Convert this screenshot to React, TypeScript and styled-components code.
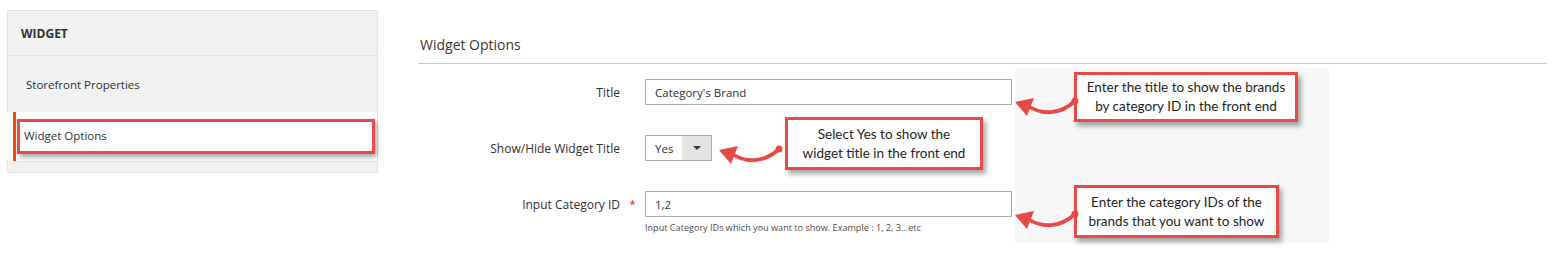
import React from 'react';
import styled, { createGlobalStyle } from 'styled-components';

const GlobalStyle = createGlobalStyle`
  html, body {
    margin: 0;
    padding: 0;
    background: #ffffff;
  }
  body {
    font-family: 'Open Sans', 'Noto Sans', sans-serif;
    color: #303030;
  }
`;

const ANNOTATION_RED = '#e84a48';

type Callout = { left: number; top: number; width: number; height: number; lines: string[] };
type ArrowSpot = { left: number; top: number };

const callouts: Callout[] = [
  { left: 1074, top: 72, width: 224, height: 50, lines: ['Enter the title to show the brands', 'by category ID in the front end'] },
  { left: 785, top: 117, width: 198, height: 53, lines: ['Select Yes to show the', 'widget title in the front end'] },
  { left: 1074, top: 185, width: 205, height: 53, lines: ['Enter the category IDs of the', 'brands that you want to show'] },
];

const arrows: ArrowSpot[] = [
  { left: 1012, top: 94 },
  { left: 716, top: 142 },
  { left: 1012, top: 207 },
];

const CurvedArrow: React.FC<{ spot: ArrowSpot }> = ({ spot }) => (
  <ArrowSvg width="68" height="26" viewBox="0 0 68 26" style={{ left: spot.left, top: spot.top }}>
    <path d="M16 12 C 30 21, 48 21, 63 7" fill="none" stroke={ANNOTATION_RED} strokeWidth="3.8" strokeLinecap="round" />
    <polygon points="3,8 22,4 15,22" fill={ANNOTATION_RED} />
    <circle cx="63" cy="7" r="3.5" fill={ANNOTATION_RED} />
  </ArrowSvg>
);

export default function App() {
  return (
    <Page>
      <GlobalStyle />
      <Sidebar>
        <SidebarHeader>Widget</SidebarHeader>
        <NavItem>Storefront Properties</NavItem>
        <ActiveItem>
          <ActiveLink>Widget Options</ActiveLink>
          <Highlight />
        </ActiveItem>
        <SidebarFooter />
      </Sidebar>

      <Main>
        <SectionTitle>Widget Options</SectionTitle>
        <Fieldset>
          <Label>Title</Label>
          <Required />
          <TextInput>Category's Brand</TextInput>

          <Label>Show/Hide Widget Title</Label>
          <Required />
          <Select>
            <SelectValue>Yes</SelectValue>
            <SelectToggle>
              <Caret />
            </SelectToggle>
          </Select>

          <Label>Input Category ID</Label>
          <Required $show>*</Required>
          <FieldControl>
            <TextInput>1,2</TextInput>
            <Note>Input Category IDs which you want to show. Example : 1, 2, 3...etc</Note>
          </FieldControl>
        </Fieldset>
      </Main>

      <Backdrop />
      {callouts.map((c) => (
        <CalloutBox key={c.lines[0]} style={{ left: c.left, top: c.top, width: c.width, height: c.height }}>
          {c.lines.map((line) => (
            <span key={line}>{line}</span>
          ))}
        </CalloutBox>
      ))}
      {arrows.map((a) => (
        <CurvedArrow key={`${a.left}-${a.top}`} spot={a} />
      ))}
    </Page>
  );
}

const Page = styled.div`
  position: relative;
  display: flex;
  align-items: flex-start;
  width: 1560px;
  height: 272px;
  overflow: hidden;
  background: #ffffff;
`;

const Sidebar = styled.nav`
  display: flex;
  flex-direction: column;
  width: 371px;
  margin: 10px 0 0 7px;
  background: #f1f1f1;
  border: 1px solid #e3e3e3;
  box-sizing: border-box;
`;

const SidebarHeader = styled.div`
  height: 44px;
  display: flex;
  align-items: center;
  padding-left: 13px;
  font-size: 12px;
  font-weight: 700;
  text-transform: uppercase;
  color: #303030;
  border-bottom: 1px solid #e3e3e3;
`;

const NavItem = styled.div`
  height: 56px;
  display: flex;
  align-items: center;
  padding-left: 18px;
  font-size: 11.5px;
  color: #303030;
`;

const ActiveItem = styled.div`
  position: relative;
  height: 49px;
  background: #ffffff;
  padding-left: 6px;
  margin-left: -1px;
`;

const ActiveLink = styled.div`
  height: 100%;
  display: flex;
  align-items: center;
  padding: 0 0 3px 8px;
  box-sizing: border-box;
  border-left: 3px solid #eb5202;
  font-size: 11.5px;
  color: #303030;
`;

const Highlight = styled.div`
  position: absolute;
  left: 10px;
  top: 7px;
  width: 358px;
  height: 35px;
  box-sizing: border-box;
  border: 3px solid ${ANNOTATION_RED};
  box-shadow: 2px 3px 5px rgba(0, 0, 0, 0.35);
`;

const SidebarFooter = styled.div`
  height: 10px;
  border-top: 1px solid #e3e3e3;
  margin-left: 7px;
`;

const Main = styled.main`
  width: 1129px;
  margin: 36px 0 0 40px;
`;

const SectionTitle = styled.h2`
  margin: 0;
  height: 18px;
  line-height: 18px;
  padding: 0 0 9px 2px;
  font-size: 14px;
  font-weight: 400;
  color: #41362f;
  border-bottom: 1px solid #cdc8c1;
`;

const Fieldset = styled.div`
  display: grid;
  grid-template-columns: 202px 25px 367px;
  grid-auto-rows: 26px;
  row-gap: 30px;
  align-items: start;
  padding-top: 15px;
`;

const Label = styled.div`
  height: 26px;
  display: flex;
  align-items: center;
  justify-content: flex-end;
  font-size: 12px;
  color: #303030;
`;

const Required = styled.div<{ $show?: boolean }>`
  height: 26px;
  display: flex;
  align-items: center;
  justify-content: center;
  padding-bottom: 1px;
  box-sizing: border-box;
  font-size: 11px;
  color: #e22626;
  visibility: ${(p) => (p.$show ? 'visible' : 'hidden')};
`;

const TextInput = styled.div`
  height: 26px;
  box-sizing: border-box;
  display: flex;
  align-items: center;
  padding-left: 9px;
  border: 1px solid #adadad;
  background: #ffffff;
  font-size: 11.5px;
  color: #303030;
`;

const FieldControl = styled.div`
  display: flex;
  flex-direction: column;
`;

const Note = styled.div`
  margin-top: 4px;
  font-size: 9.1px;
  line-height: 14px;
  color: #514943;
`;

const Select = styled.div`
  width: 67px;
  height: 26px;
  box-sizing: border-box;
  display: flex;
  border: 1px solid #adadad;
  background: #ffffff;
`;

const SelectValue = styled.div`
  flex: 1;
  display: flex;
  align-items: center;
  padding-left: 9px;
  font-size: 11.5px;
  color: #303030;
`;

const SelectToggle = styled.div`
  width: 29px;
  display: flex;
  align-items: center;
  justify-content: center;
  background: #e3e3e3;
`;

const Caret = styled.span`
  width: 0;
  height: 0;
  border-left: 4px solid transparent;
  border-right: 4px solid transparent;
  border-top: 4px solid #41362f;
`;

const Backdrop = styled.div`
  position: absolute;
  left: 1015px;
  top: 68px;
  width: 314px;
  height: 175px;
  background: #f7f7f7;
`;

const CalloutBox = styled.div`
  position: absolute;
  box-sizing: border-box;
  display: flex;
  flex-direction: column;
  align-items: center;
  justify-content: center;
  border: 3px solid ${ANNOTATION_RED};
  background: #ffffff;
  box-shadow: 3px 4px 5px rgba(0, 0, 0, 0.35);
  font-family: Lato, 'Open Sans', sans-serif;
  font-size: 13.5px;
  line-height: 19px;
  color: #1e1e1e;
`;

const ArrowSvg = styled.svg`
  position: absolute;
  overflow: visible;
`;
